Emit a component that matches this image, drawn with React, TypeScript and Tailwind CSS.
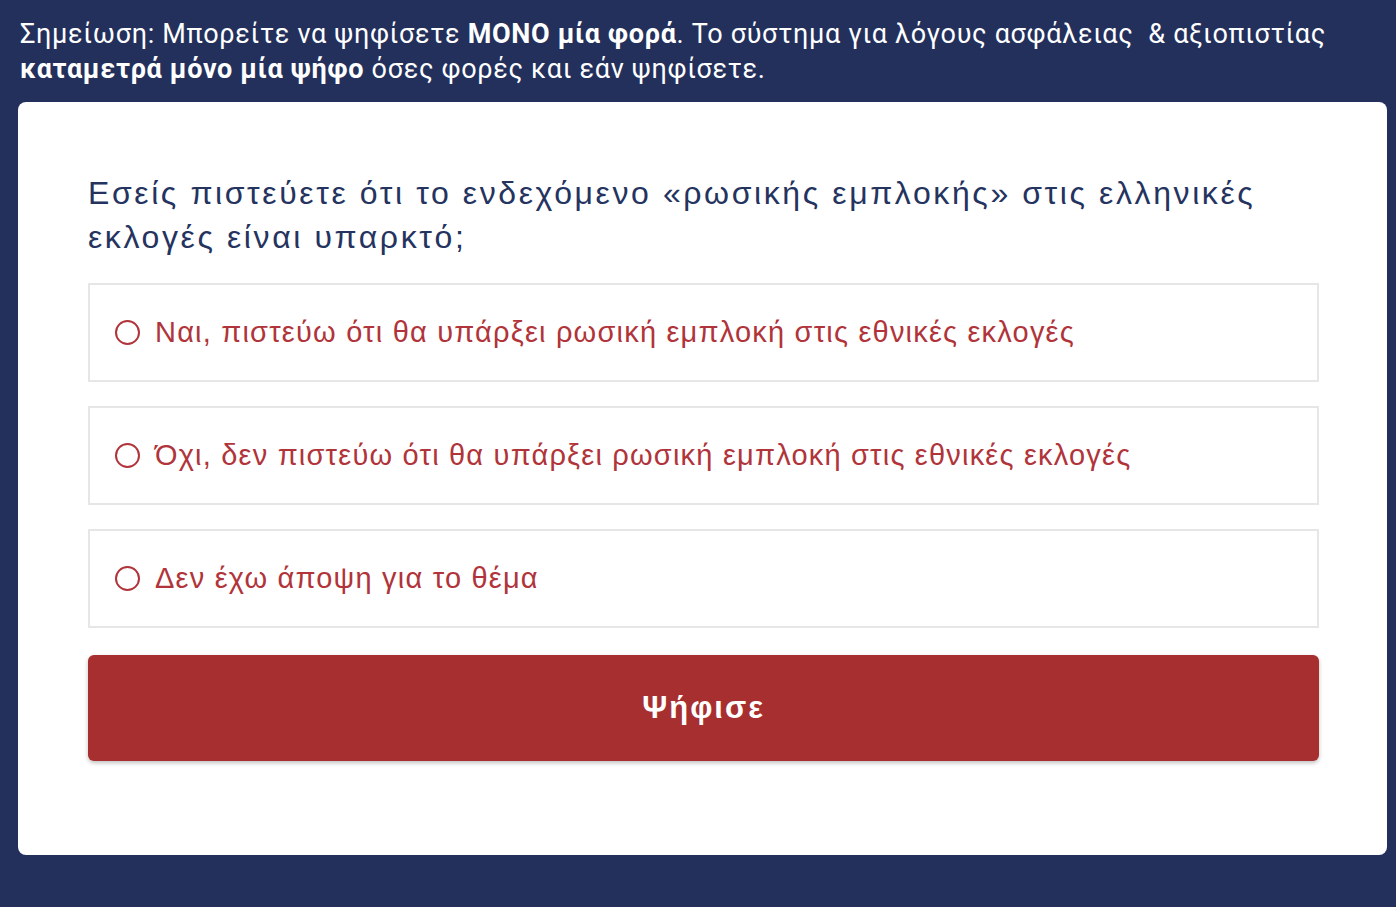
export default function App() {
  const options = [
    "Ναι, πιστεύω ότι θα υπάρξει ρωσική εμπλοκή στις εθνικές εκλογές",
    "Όχι, δεν πιστεύω ότι θα υπάρξει ρωσική εμπλοκή στις εθνικές εκλογές",
    "Δεν έχω άποψη για το θέμα",
  ];

  return (
    <div className="min-h-[907px] bg-[#23305c] px-[18px] pt-[17px] pb-[51px] font-['Liberation_Sans',Arial,sans-serif]">
      <p className="pl-[2px] font-['Roboto',sans-serif] text-[27px] leading-[35px] tracking-[0.68px] text-white">
        Σημείωση: Μπορείτε να ψηφίσετε <b>ΜΟΝΟ μία φορά</b>. Το σύστημα για λόγους ασφάλειας{"\u00a0"} &amp; αξιοπιστίας
        <br />
        <b>καταμετρά μόνο μία ψήφο</b> όσες φορές και εάν ψηφίσετε.
      </p>

      <div className="mt-[15px] mr-[-9px] rounded-lg bg-white pt-[69px] pr-[68px] pb-[94px] pl-[70px]">
        <h2 className="text-[32px] leading-[44px] tracking-[2.6px] text-[#25335f]">
          Εσείς πιστεύετε ότι το ενδεχόμενο «ρωσικής εμπλοκής» στις ελληνικές
          <br />
          εκλογές είναι υπαρκτό;
        </h2>

        <div className="mt-[24px] flex flex-col gap-[24px]">
          {options.map((label) => (
            <label
              key={label}
              className="flex h-[99px] cursor-pointer items-center gap-[15px] border-2 border-[#e6e6e6] pl-[25px] text-[#b0343a]"
            >
              <span className="h-[25px] w-[25px] shrink-0 rounded-full border-2 border-[#b0343a]" />
              <span className="text-[29px] tracking-[1.2px]">{label}</span>
            </label>
          ))}
        </div>

        <button
          type="button"
          className="mt-[27px] flex h-[106px] w-full items-center justify-center rounded-md bg-[#a82f2f] text-[31px] font-bold tracking-[2px] text-white shadow-[0_2px_4px_rgba(0,0,0,0.25)]"
        >
          Ψήφισε
        </button>
      </div>
    </div>
  );
}
